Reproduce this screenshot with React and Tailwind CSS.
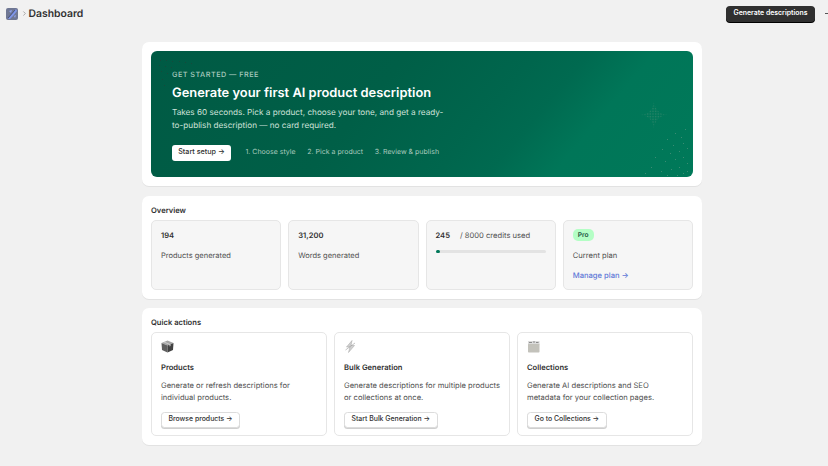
import React from "react";
import { ChevronRight } from "lucide-react";

const Logo = () => (
  <svg width="12" height="12" viewBox="0 0 12 12" className="rounded-[2px]">
    <rect width="12" height="12" fill="#6f7793" />
    <path d="M2 11 L6 6 L10 1 L11 3 L7 8 L4 11 Z" fill="#7f96ea" />
    <path d="M3 3 L6 2 L5 5 Z M8 8 L10 7 L9 10 Z" fill="#8fa3ee" />
    <path d="M2 10 L9 2" stroke="#3f4a78" strokeWidth="0.8" />
  </svg>
);

const BoxIcon = () => (
  <svg width="13" height="13" viewBox="0 0 13 13">
    <path d="M6.5 0.5 L12.5 3 L6.5 5.5 L0.5 3 Z" fill="#a5a5a5" />
    <path d="M0.5 3 L6.5 5.5 L6.5 12.5 L1 10 Z" fill="#5f5f5f" />
    <path d="M12.5 3 L6.5 5.5 L6.5 12.5 L12 10 Z" fill="#424242" />
    <path d="M3.5 1.8 L9.5 4.2 L9.5 6 L8.5 6.4 L8.5 4.7 L2.5 2.2 Z" fill="#cfcfcf" />
  </svg>
);

const BoltIcon = () => (
  <svg width="13" height="13" viewBox="0 0 13 13">
    <path d="M8 0.5 L2.5 7 L6 7 L4.5 12.5 L10.5 5.5 L7 5.5 Z" fill="#d0d0d0" stroke="#a5a5a5" strokeWidth="0.5" />
    <path d="M1.5 10 L11 3" stroke="#9a9a9a" strokeWidth="0.6" />
  </svg>
);

const FolderIcon = () => (
  <svg width="13" height="13" viewBox="0 0 13 13">
    <rect x="1" y="3.5" width="11.5" height="9" rx="0.8" fill="#c3c2bb" />
    <rect x="1" y="1" width="11.5" height="3" fill="#dcdcdc" />
    <path d="M2 2.5 H5 M6 2 H8 M9 2.5 H11.5" stroke="#777777" strokeWidth="0.8" />
  </svg>
);

const Sparkle = () => (
  <svg width="30" height="30" viewBox="0 0 30 30">
    <defs>
      <pattern id="sparkdots" width="1.6" height="1.6" patternUnits="userSpaceOnUse">
        <rect width="0.8" height="0.8" fill="#2c8569" />
      </pattern>
    </defs>
    <path d="M15 1 C16 10 20 14 29 15 C20 16 16 20 15 29 C14 20 10 16 1 15 C10 14 14 10 15 1 Z" fill="url(#sparkdots)" />
  </svg>
);

// faint speckle in the hero corners
const cornerDots = [
  [5, 5], [11, 5], [17, 6], [24, 6], [30, 7], [36, 8], [4, 10], [10, 11], [16, 12], [6, 16], [12, 18], [7, 24], [9, 30],
];
const edgeDots = [
  [48, 6], [44, 14], [38, 10], [30, 16], [36, 22], [46, 20], [50, 25], [42, 28], [33, 30], [25, 26], [18, 34], [28, 38],
  [38, 36], [46, 34], [50, 40], [42, 44], [34, 46], [24, 48], [14, 44], [8, 50], [46, 50], [50, 48], [30, 52], [40, 52],
];

const stats = [
  { value: "194", label: "Products generated" },
  { value: "31,200", label: "Words generated" },
];

const actions = [
  {
    icon: <BoxIcon />,
    title: "Products",
    text: ["Generate or refresh descriptions for", "individual products."],
    button: "Browse products →",
  },
  {
    icon: <BoltIcon />,
    title: "Bulk Generation",
    text: ["Generate descriptions for multiple products", "or collections at once."],
    button: "Start Bulk Generation →",
  },
  {
    icon: <FolderIcon />,
    title: "Collections",
    text: ["Generate AI descriptions and SEO", "metadata for your collection pages."],
    button: "Go to Collections →",
  },
];

const Card = ({ children, className = "" }) => (
  <section className={`bg-white rounded-[7px] p-[9px] shadow-[0_1px_0_#e2e2e2] ${className}`}>{children}</section>
);

const StatBox = ({ children }) => (
  <div className="h-[70px] rounded-[5px] bg-[#f6f6f6] border border-[#e6e6e6] px-[9px] pt-[9px]">{children}</div>
);

export default function App() {
  return (
    <div className="w-[828px] h-[466px] overflow-hidden bg-[#f1f1f1] text-[#303030] font-['Inter',sans-serif] [text-rendering:geometricPrecision]">
      <header className="h-[27px] flex items-center pl-[6px]">
        <Logo />
        <ChevronRight size={7} strokeWidth={2} className="ml-[3px] mr-[0.5px] text-[#777777]" />
        <h1 className="text-[10.4px] font-semibold text-[#303030]">Dashboard</h1>
        <button className="ml-auto h-[16px] w-[89px] rounded-[4px] bg-[#303030] text-white text-[6.9px] font-semibold shadow-[0_1px_0_#000]">
          Generate descriptions
        </button>
        <span className="ml-[10px] w-[3px] h-[1px] bg-[#555555]" />
      </header>

      <main className="w-[560px] ml-[142px] mt-[15px] flex flex-col gap-[9.5px]">
        <Card>
          <div className="relative h-[126px] overflow-hidden rounded-[6px] pl-[21px] pt-[19px] bg-[linear-gradient(130deg,#005a44_0%,#005f47_40%,#00664d_60%,#006a50_68%,#007658_78%,#007959_100%)]">
            <svg width="40" height="34" className="absolute left-[4px] top-[4px]">
              {cornerDots.map(([x, y]) => (
                <rect key={`${x}-${y}`} x={x} y={y} width="1" height="1" fill="#17493b" />
              ))}
            </svg>
            <svg width="54" height="54" className="absolute right-[2px] bottom-0">
              {edgeDots.map(([x, y]) => (
                <rect key={`${x}-${y}`} x={x} y={y} width="1" height="1" fill="#3a8c73" />
              ))}
            </svg>
            <div className="absolute right-[24px] top-[49px]">
              <Sparkle />
            </div>
            <p className="text-[7.3px] leading-[10px] font-medium tracking-[0.45px] text-[#aacbbf]">GET STARTED — FREE</p>
            <h2 className="mt-[4px] text-[12.9px] leading-[20px] font-semibold text-white">
              Generate your first AI product description
            </h2>
            <p className="mt-[2px] w-[276px] text-[8.2px] leading-[12.5px] text-[#cfe2db]">
              Takes 60 seconds. Pick a product, choose your tone, and get a ready-to-publish description — no card required.
            </p>
            <div className="relative mt-[13.5px] flex items-center">
              <button className="h-[16px] w-[59px] rounded-[3px] bg-white text-[#303030] text-[7.2px] font-medium">
                Start setup →
              </button>
              <div className="ml-[14.5px] flex gap-[11.7px] text-[7px] text-[#aacbbf]">
                <span>1. Choose style</span>
                <span>2. Pick a product</span>
                <span>3. Review &amp; publish</span>
              </div>
            </div>
          </div>
        </Card>

        <Card className="h-[103px]">
          <h3 className="text-[7.6px] leading-[12px] font-semibold text-[#303030]">Overview</h3>
          <div className="mt-[3px] grid grid-cols-4 gap-[7px]">
            {stats.map((s) => (
              <StatBox key={s.label}>
                <p className="text-[7.6px] leading-[12px] font-semibold text-[#303030]">{s.value}</p>
                <p className="mt-[8px] text-[7.5px] leading-[12px] text-[#505050]">{s.label}</p>
              </StatBox>
            ))}
            <StatBox>
              <p className="text-[7.6px] leading-[12px] text-[#505050]">
                <span className="font-semibold text-[#303030] mr-[10px]">245</span>/ 8000 credits used
              </p>
              <div className="mt-[8px] h-[3px] rounded-full bg-[#e3e3e3]">
                <div className="h-[3px] w-[4px] rounded-full bg-[#00785a]" />
              </div>
            </StatBox>
            <StatBox>
              <span className="block w-fit -mt-[1px] h-[12px] px-[5px] rounded-[5px] bg-[#b4fec5] text-[6.6px] leading-[12px] font-semibold text-[#20543f]">Pro</span>
              <p className="mt-[9px] text-[7.6px] leading-[12px] text-[#505050]">Current plan</p>
              <a className="block mt-[8px] text-[7.6px] leading-[12px] font-medium text-[#5d76d6]">Manage plan →</a>
            </StatBox>
          </div>
        </Card>

        <Card className="h-[137px]">
          <h3 className="text-[7.6px] leading-[12px] font-semibold text-[#303030]">Quick actions</h3>
          <div className="mt-[3px] grid grid-cols-3 gap-[7px]">
            {actions.map((a) => (
              <div key={a.title} className="h-[104px] rounded-[5px] bg-white border border-[#e6e6e6] pl-[9px] pt-[7px]">
                <div className="h-[13px]">{a.icon}</div>
                <p className="mt-[9px] text-[7.6px] leading-[12px] font-semibold text-[#303030]">{a.title}</p>
                <p className="mt-[6px] text-[7.6px] leading-[11.5px] whitespace-nowrap text-[#505050]">
                  {a.text[0]}
                  <br />
                  {a.text[1]}
                </p>
                <button className="block mt-[9px] h-[15.5px] px-[6.5px] rounded-[3.5px] bg-white border border-[#dcdcdc] shadow-[0_1px_0_#cfcfcf] text-[6.9px] leading-none font-medium text-[#303030]">
                  {a.button}
                </button>
              </div>
            ))}
          </div>
        </Card>
      </main>
    </div>
  );
}
